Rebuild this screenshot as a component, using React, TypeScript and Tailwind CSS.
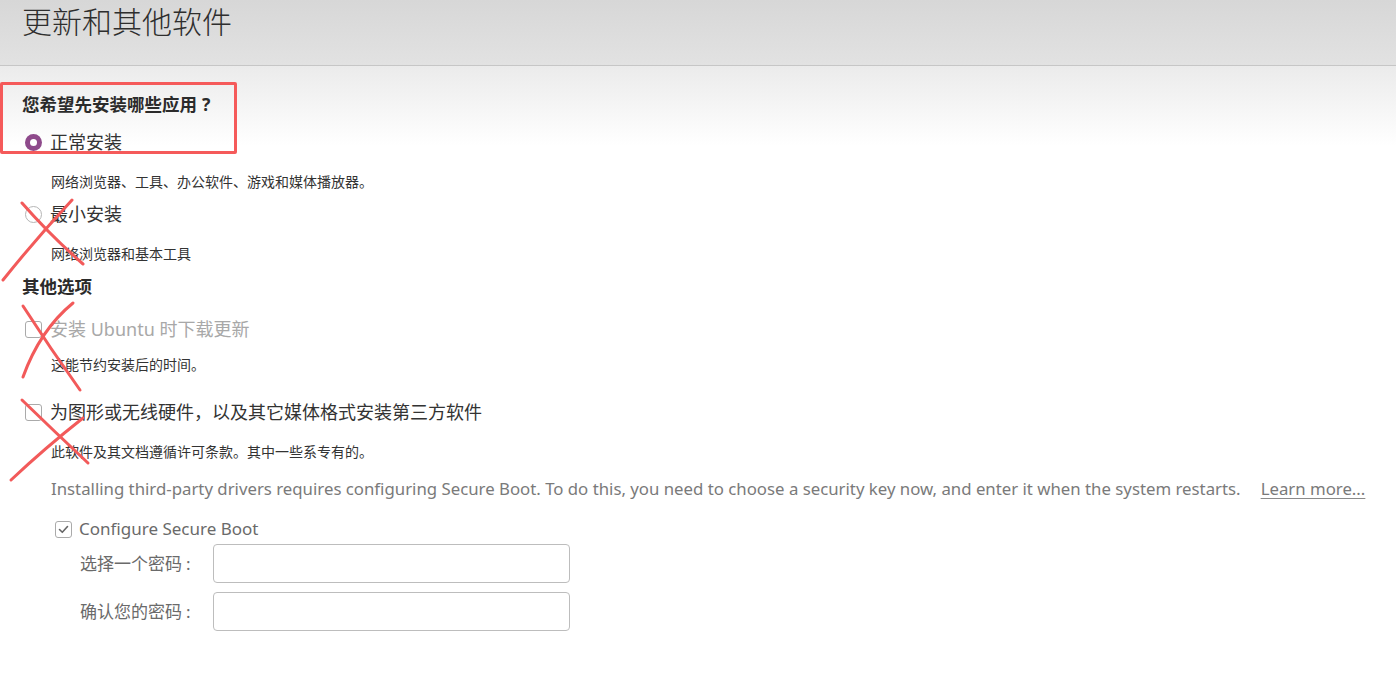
const cjk = 'font-["Noto_Sans","Noto_Sans_CJK_SC",sans-serif]';

function Radio({ checked }: { checked?: boolean }) {
  if (checked) {
    return (
      <span className="flex h-[17px] w-[17px] shrink-0 items-center justify-center rounded-full bg-[#8e4a8b]">
        <span className="h-[7px] w-[7px] rounded-full bg-white" />
      </span>
    );
  }
  return <span className="h-[17px] w-[17px] shrink-0 rounded-full border border-[#b5b5b5] bg-white" />;
}

function Checkbox({ checked }: { checked?: boolean }) {
  return (
    <span className="flex h-[17px] w-[17px] shrink-0 items-center justify-center rounded-[3px] border border-[#aaaaaa] bg-white">
      {checked && (
        <svg width="13" height="13" viewBox="0 0 13 13" fill="none">
          <path d="M2.5 6.5 L5.3 9.3 L10.5 3.5" stroke="#666" strokeWidth="1.6" strokeLinecap="round" strokeLinejoin="round" />
        </svg>
      )}
    </span>
  );
}

function PasswordRow({ label, className }: { label: string; className: string }) {
  return (
    <div className={`flex items-center pl-[80px] ${className}`}>
      <span className="w-[133px] shrink-0 text-[17px] text-[#6a6a6a] whitespace-nowrap">
        {label}
        <span className="ml-[4px]">:</span>
      </span>
      <div className="h-[39px] w-[357px] rounded-[4px] border border-[#bdbdbd] bg-white" />
    </div>
  );
}

export default function App() {
  return (
    <div className={`relative h-[673px] w-[1396px] overflow-hidden bg-white ${cjk}`}>
      <header className="h-[66px] border-b border-[#c6c6c6] bg-gradient-to-b from-[#d7d7d7] to-[#e2e2e2] pl-[22px] pt-[3px]">
        <h1 className="text-[30px] leading-[38px] font-light text-[#2e2e2e]">更新和其他软件</h1>
      </header>

      <div className="bg-[linear-gradient(to_bottom,#ebebeb_0px,#ffffff_80px)] pt-[24px] pb-[40px]">
        <div className="flex h-[28px] items-center pl-[22px] text-[17.5px] font-bold text-[#2b2b2b]">
          您希望先安装哪些应用<span className="ml-[5px]">?</span>
        </div>

        <div className="mt-[10px] flex h-[28px] items-center gap-[8px] pl-[25px] text-[18px] text-[#333]">
          <Radio checked />
          <span>正常安装</span>
        </div>
        <div className="mt-[14px] flex h-[22px] items-center pl-[51px] text-[14px] text-[#333]">
          网络浏览器、工具、办公软件、游戏和媒体播放器。
        </div>

        <div className="mt-[8px] flex h-[28px] items-center gap-[8px] pl-[25px] text-[18px] text-[#333]">
          <Radio />
          <span>最小安装</span>
        </div>
        <div className="mt-[14px] flex h-[22px] items-center pl-[51px] text-[14px] text-[#333]">
          网络浏览器和基本工具
        </div>

        <div className="mt-[8px] flex h-[28px] items-center pl-[22px] text-[17.5px] font-bold text-[#2b2b2b]">
          其他选项
        </div>

        <div className="mt-[15px] flex h-[28px] items-center gap-[8px] pl-[25px] text-[18px] text-[#a8a8a8]">
          <Checkbox />
          <span>安装 Ubuntu 时下载更新</span>
        </div>
        <div className="mt-[10px] flex h-[22px] items-center pl-[51px] text-[14px] text-[#333]">
          这能节约安装后的时间。
        </div>

        <div className="mt-[23px] flex h-[28px] items-center gap-[8px] pl-[25px] text-[18px] text-[#333]">
          <Checkbox />
          <span>为图形或无线硬件，以及其它媒体格式安装第三方软件</span>
        </div>
        <div className="mt-[14px] flex h-[22px] items-center pl-[51px] text-[14px] text-[#333]">
          此软件及其文档遵循许可条款。其中一些系专有的。
        </div>

        <div className="mt-[16px] flex h-[22px] items-center pl-[51px] text-[16.8px] text-[#7a7a7a] whitespace-nowrap">
          <span>
            Installing third-party drivers requires configuring Secure Boot. To do this, you need to choose a security key now, and enter it when the system restarts.
          </span>
          <a className="ml-[20px] underline underline-offset-[3px] decoration-[#8a8a8a]">Learn more...</a>
        </div>

        <div className="mt-[18px] flex h-[22px] items-center gap-[7px] pl-[55px] text-[17px] text-[#6a6a6a]">
          <Checkbox checked />
          <span>Configure Secure Boot</span>
        </div>

        <PasswordRow label="选择一个密码" className="mt-[4px]" />
        <PasswordRow label="确认您的密码" className="mt-[9px]" />
      </div>

      {/* annotation overlay */}
      <div className="pointer-events-none absolute left-0 top-[82px] h-[72px] w-[237px] rounded-[2px] border-[3px] border-[#f55a5a]" />
      <svg className="pointer-events-none absolute left-0 top-0" width="1396" height="673" fill="none">
        <g stroke="#f25a5a" strokeWidth="3" strokeLinecap="round">
          <path d="M3 280 Q35 240 72 200" />
          <path d="M22 203 Q50 235 83 264" />
          <path d="M23 306 Q50 348 80 390" />
          <path d="M73 303 Q40 330 23 377" />
          <path d="M22 400 Q55 432 88 463" />
          <path d="M83 418 Q45 448 11 480" />
        </g>
      </svg>
    </div>
  );
}
